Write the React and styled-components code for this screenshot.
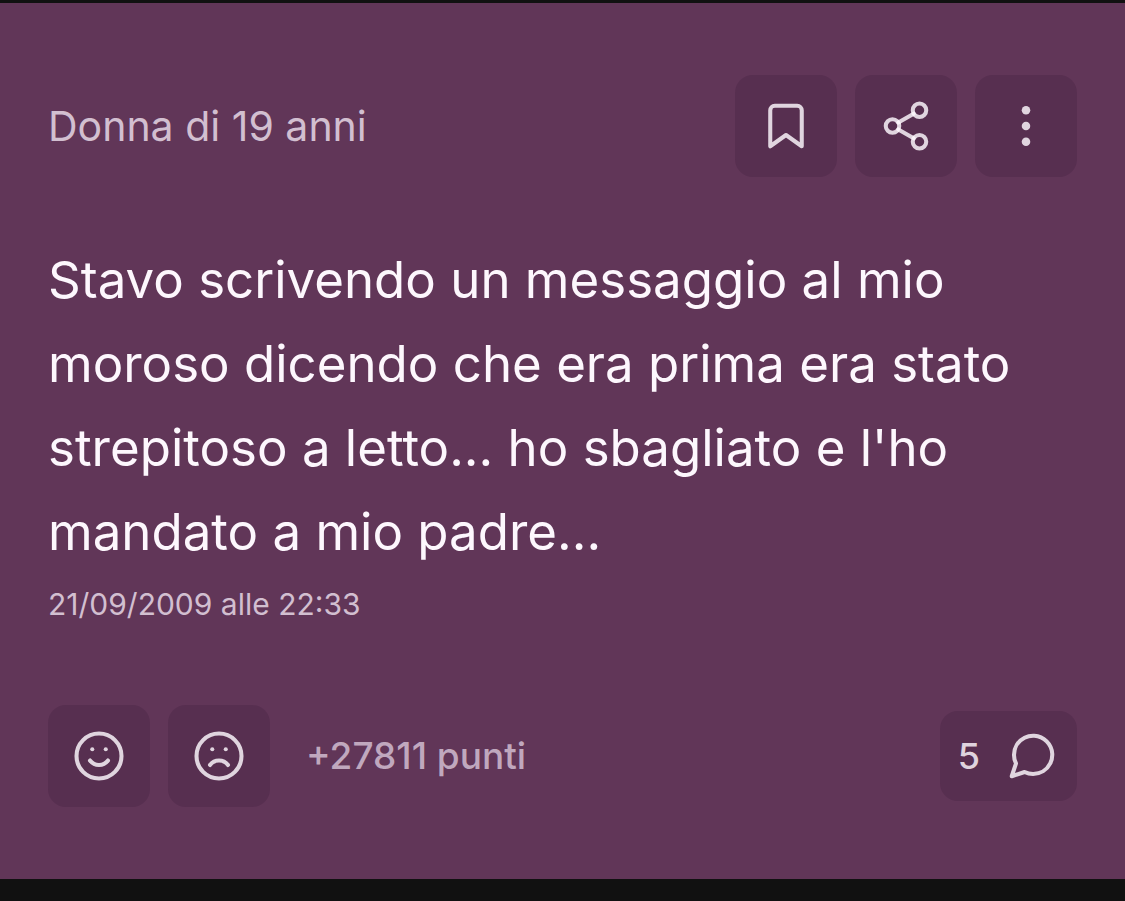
import React from 'react';
import styled, { createGlobalStyle } from 'styled-components';

function App() {
  return (
    <>
      <GlobalStyle />
      <Card>
        <Header>
          <Author>Donna di 19 anni</Author>
          <Actions>
            <IconButton type="button" aria-label="Salva">
              <Icon>
                <path d="M19 21l-7-5-7 5V5a2 2 0 0 1 2-2h10a2 2 0 0 1 2 2z" />
              </Icon>
            </IconButton>
            <IconButton type="button" aria-label="Condividi">
              <Icon>
                <circle cx="18" cy="5" r="3" />
                <circle cx="6" cy="12" r="3" />
                <circle cx="18" cy="19" r="3" />
                <line x1="8.59" y1="13.51" x2="15.42" y2="17.49" />
                <line x1="15.41" y1="6.51" x2="8.59" y2="10.49" />
              </Icon>
            </IconButton>
            <IconButton type="button" aria-label="Altro">
              <Icon>
                <Dot cx="12" cy="5" r="1.9" />
                <Dot cx="12" cy="12" r="1.9" />
                <Dot cx="12" cy="19" r="1.9" />
              </Icon>
            </IconButton>
          </Actions>
        </Header>
        <Story>
          Stavo scrivendo un messaggio al mio moroso dicendo che era prima era
          stato strepitoso a letto... ho sbagliato e l'ho mandato a mio padre...
        </Story>
        <Published>21/09/2009 alle 22:33</Published>
        <Footer>
          <Actions>
            <IconButton type="button" aria-label="Mi piace">
              <Icon>
                <circle cx="12" cy="12" r="10" />
                <path d="M8 14s1.5 2 4 2 4-2 4-2" />
                <line x1="9" y1="9" x2="9.01" y2="9" />
                <line x1="15" y1="9" x2="15.01" y2="9" />
              </Icon>
            </IconButton>
            <IconButton type="button" aria-label="Non mi piace">
              <Icon>
                <circle cx="12" cy="12" r="10" />
                <path d="M16 16s-1.5-2-4-2-4 2-4 2" />
                <line x1="9" y1="9" x2="9.01" y2="9" />
                <line x1="15" y1="9" x2="15.01" y2="9" />
              </Icon>
            </IconButton>
          </Actions>
          <Points>+27811 punti</Points>
          <CommentsButton type="button" aria-label="5 commenti">
            <span>5</span>
            <Icon>
              <path d="M21 11.5a8.38 8.38 0 0 1-.9 3.8 8.5 8.5 0 0 1-7.6 4.7 8.38 8.38 0 0 1-3.8-.9L3 21l1.9-5.7a8.38 8.38 0 0 1-.9-3.8 8.5 8.5 0 0 1 4.7-7.6 8.38 8.38 0 0 1 3.8-.9h.5a8.48 8.48 0 0 1 8 8v.5z" />
            </Icon>
          </CommentsButton>
        </Footer>
      </Card>
    </>
  );
}

const GlobalStyle = createGlobalStyle`
  * {
    box-sizing: border-box;
  }
  body {
    margin: 0;
    padding: 3px 0 22px;
    background: #111111;
    font-family: Inter, 'Liberation Sans', sans-serif;
  }
`;

const Card = styled.article`
  padding: 72px 48px;
  background: #613658;
`;

const Header = styled.header`
  display: flex;
  align-items: center;
  justify-content: space-between;
`;

const Author = styled.span`
  font-size: 41px;
  line-height: 60px;
  color: #d2bfd0;
`;

const Actions = styled.div`
  display: flex;
  gap: 18px;
`;

const BaseButton = styled.button`
  display: flex;
  align-items: center;
  padding: 18px;
  border: none;
  border-radius: 18px;
  background: #572f50;
  color: rgba(255, 250, 255, 0.82);
  font-family: inherit;
  cursor: pointer;
`;

const IconButton = styled(BaseButton)`
  padding: 24px;
`;

const CommentsButton = styled(BaseButton)`
  gap: 25px;
  margin-left: auto;
  font-size: 36px;
  font-weight: 500;
`;

const Icon = styled.svg.attrs({
  viewBox: '0 0 24 24',
  'aria-hidden': true,
})`
  display: block;
  width: 54px;
  height: 54px;
  fill: none;
  stroke: currentColor;
  stroke-width: 1.8;
  stroke-linecap: round;
  stroke-linejoin: round;
`;

const Dot = styled.circle`
  fill: currentColor;
  stroke: none;
`;

const Story = styled.p`
  margin: 61px 0 0;
  font-size: 51px;
  line-height: 84px;
  color: #fdf7fd;
`;

const Published = styled.time`
  display: block;
  margin-top: 6px;
  font-size: 30px;
  line-height: 48px;
  color: #d2bfd0;
`;

const Footer = styled.footer`
  display: flex;
  align-items: center;
  margin-top: 77px;
`;

const Points = styled.span`
  margin-left: 36px;
  font-size: 37px;
  line-height: 54px;
  font-weight: 500;
  color: #c0a8be;
`;

export default App;
